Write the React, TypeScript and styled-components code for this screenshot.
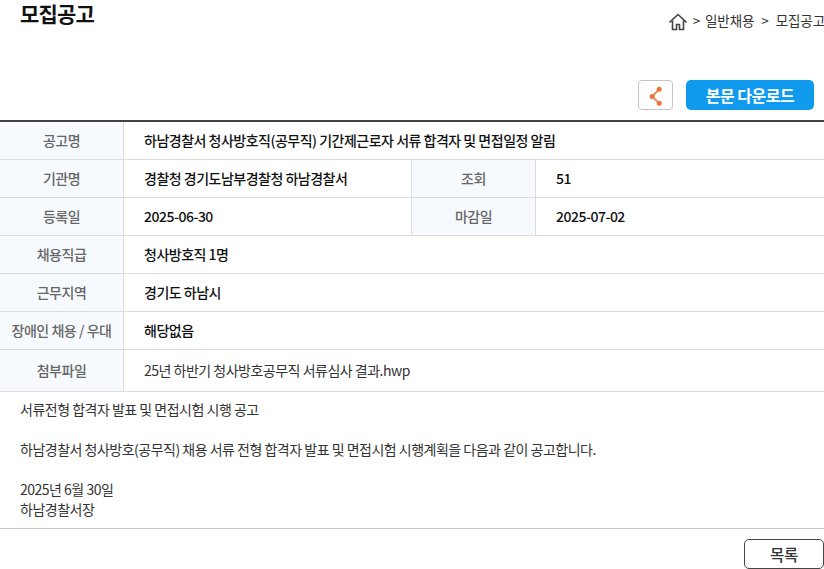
import React from "react";
import styled, { createGlobalStyle } from "styled-components";

const GlobalStyle = createGlobalStyle`
  html, body {
    margin: 0;
    padding: 0;
    background: #fff;
    overflow: hidden;
  }
  body {
    font-family: "Noto Sans CJK KR", "Noto Sans", sans-serif;
    color: #222;
  }
`;

const Page = styled.div`
  width: 824px;
  height: 569px;
  overflow: hidden;
`;

const TitleBar = styled.div`
  display: flex;
  justify-content: space-between;
  height: 80px;
  padding-left: 20px;
`;

const Title = styled.h2`
  margin: 0;
  font-size: 21px;
  line-height: 27px;
  font-weight: 700;
  color: #111;
  letter-spacing: -0.8px;
`;

const Breadcrumb = styled.div`
  display: flex;
  align-items: flex-start;
  gap: 5px;
  padding-top: 11px;
  font-size: 13.5px;
  line-height: 19px;
  color: #333;
  white-space: nowrap;
  margin-right: -1px;
  letter-spacing: -0.1px;
`;

const Separator = styled.span`
  margin: 0 2px;
`;

const HomeIcon = styled.svg`
  width: 18px;
  height: 18px;
  margin-top: 2px;
  margin-right: 1px;
`;

const Actions = styled.div`
  display: flex;
  justify-content: flex-end;
  gap: 13px;
  height: 30px;
  padding-right: 10px;
  margin-bottom: 10px;
`;

const ShareButton = styled.button`
  display: flex;
  align-items: center;
  justify-content: center;
  width: 35px;
  height: 30px;
  padding: 0;
  background: #fff;
  border: 1px solid #c4c4c4;
  border-radius: 4px;
`;

const DownloadButton = styled.button`
  width: 128px;
  height: 30px;
  padding: 0 0 1px;
  background: #0f9aee;
  border: 0;
  border-radius: 5px;
  color: #fff;
  font-family: inherit;
  font-size: 16px;
  font-weight: 700;
  letter-spacing: -0.47px;
`;

const Table = styled.div`
  border-top: 2px solid #444;
`;

const Row = styled.div<{ $height?: number }>`
  display: flex;
  height: ${(p) => p.$height ?? 37}px;
  border-bottom: 1px solid #dcdcdc;
`;

const Label = styled.div`
  flex: 0 0 124px;
  display: flex;
  align-items: center;
  justify-content: center;
  padding-bottom: 2px;
  box-sizing: border-box;
  background: #f6fafe;
  border-right: 1px solid #dcdcdc;
  font-size: 14px;
  font-weight: 500;
  color: #666;
  white-space: nowrap;
  letter-spacing: -0.47px;
`;

const SideLabel = styled(Label)`
  flex-basis: 125px;
  border-left: 1px solid #dcdcdc;
`;

const Value = styled.div<{ $width?: number; $plain?: boolean }>`
  ${(p) => (p.$width ? `flex: 0 0 ${p.$width}px;` : "flex: 1;")}
  display: flex;
  align-items: center;
  padding: 0 0 2px 20px;
  box-sizing: border-box;
  font-size: 14px;
  font-weight: ${(p) => (p.$plain ? 400 : 500)};
  color: ${(p) => (p.$plain ? "#333" : "#111")};
  white-space: nowrap;
  letter-spacing: -0.5px;
`;

const Body = styled.div`
  height: 137px;
  padding: 7px 20px 0;
  box-sizing: border-box;
  border-bottom: 1px solid #c8c8c8;
  font-size: 14px;
  line-height: 20px;
  color: #333;
  letter-spacing: -0.5px;
`;

const Line = styled.div`
  min-height: 20px;
`;

const Footer = styled.div`
  display: flex;
  justify-content: flex-end;
  padding-top: 10px;
`;

const ListButton = styled.button`
  width: 80px;
  height: 30px;
  padding: 0 0 1px;
  background: #fff;
  border: 1px solid #444;
  border-radius: 5px;
  font-family: inherit;
  font-size: 15.5px;
  font-weight: 500;
  color: #333;
  letter-spacing: -0.3px;
`;

const App: React.FC = () => (
  <>
    <GlobalStyle />
    <Page>
      <TitleBar>
        <Title>모집공고</Title>
        <Breadcrumb>
          <HomeIcon viewBox="0 0 18 18" fill="none" stroke="#444" strokeWidth="1.6">
            <path d="M0.5 9.5 9 1.5l8.5 8" />
            <path d="M3.5 7.5V16.5h4v-5h3v5h4V7.5" />
          </HomeIcon>
          <span>&gt;</span>
          <span>일반채용</span>
          <Separator>&gt;</Separator>
          <span>모집공고</span>
        </Breadcrumb>
      </TitleBar>
      <Actions>
        <ShareButton aria-label="공유">
          <svg width="16" height="22" viewBox="0 0 16 22" stroke="#ef7336" fill="#ef7336">
            <path d="M11.2 5.3 4.2 12.5l7 6.8" fill="none" strokeWidth="1.6" />
            <circle cx="11.2" cy="5.3" r="2.5" stroke="none" />
            <circle cx="4.2" cy="12.5" r="2.5" stroke="none" />
            <circle cx="11.2" cy="19.3" r="2.5" stroke="none" />
          </svg>
        </ShareButton>
        <DownloadButton>본문 다운로드</DownloadButton>
      </Actions>
      <Table>
        <Row>
          <Label>공고명</Label>
          <Value>하남경찰서 청사방호직(공무직) 기간제근로자 서류 합격자 및 면접일정 알림</Value>
        </Row>
        <Row>
          <Label>기관명</Label>
          <Value $width={287}>경찰청 경기도남부경찰청 하남경찰서</Value>
          <SideLabel>조회</SideLabel>
          <Value>51</Value>
        </Row>
        <Row>
          <Label>등록일</Label>
          <Value $width={287}>2025-06-30</Value>
          <SideLabel>마감일</SideLabel>
          <Value>2025-07-02</Value>
        </Row>
        <Row>
          <Label>채용직급</Label>
          <Value>청사방호직 1명</Value>
        </Row>
        <Row>
          <Label>근무지역</Label>
          <Value>경기도 하남시</Value>
        </Row>
        <Row>
          <Label>장애인 채용 / 우대</Label>
          <Value>해당없음</Value>
        </Row>
        <Row $height={41}>
          <Label>첨부파일</Label>
          <Value $plain>25년 하반기 청사방호공무직 서류심사 결과.hwp</Value>
        </Row>
      </Table>
      <Body>
        <Line>서류전형 합격자 발표 및 면접시험 시행 공고</Line>
        <Line />
        <Line>하남경찰서 청사방호(공무직) 채용 서류 전형 합격자 발표 및 면접시험 시행계획을 다음과 같이 공고합니다.</Line>
        <Line />
        <Line>2025년 6월 30일</Line>
        <Line>하남경찰서장</Line>
      </Body>
      <Footer>
        <ListButton>목록</ListButton>
      </Footer>
    </Page>
  </>
);

export default App;
